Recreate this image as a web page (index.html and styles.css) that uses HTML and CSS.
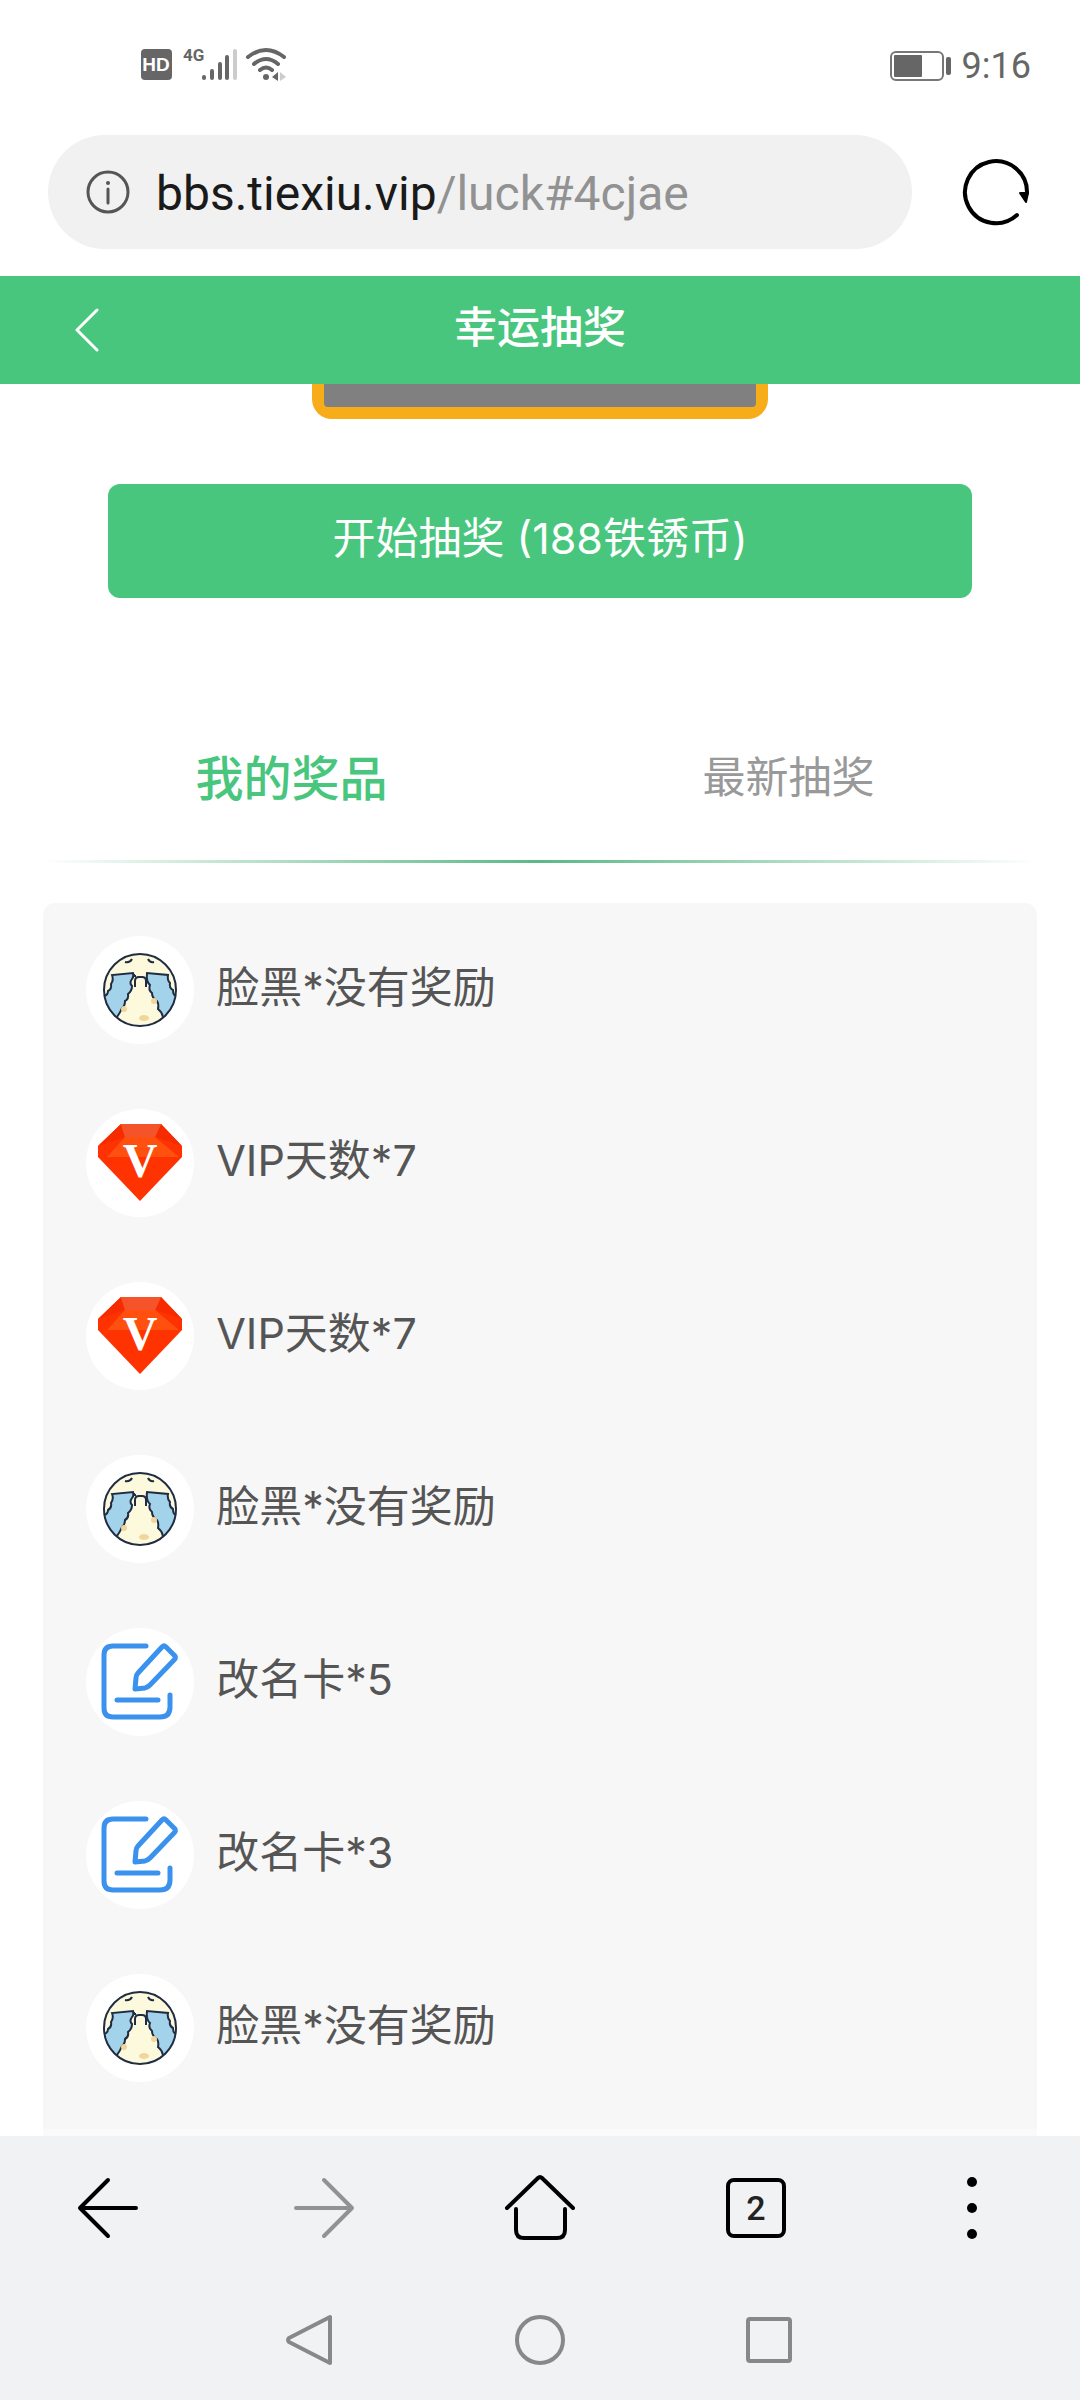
FILE: index.html
```html
<!DOCTYPE html>
<html lang="zh-CN">
<head>
<meta charset="utf-8">
<meta name="viewport" content="width=device-width, initial-scale=1">
<title>幸运抽奖</title>
<link rel="stylesheet" href="styles.css">
</head>
<body>
<svg class="defs" aria-hidden="true">
  <symbol id="face" viewBox="0 0 108 108">
    <circle cx="54" cy="54" r="36" fill="#fdf9dc"/>
    <path d="M26 39 47 37Q48 41 46 43Q43 47 46 50Q46 55 42 58Q43 63 39 65Q39 70 36 72Q34 77 31 81Q19 72 18 60Q22 59 22 55Q26 53 25 48Q28 44 26 39ZM61 37 82 39Q81 44 84 47Q83 52 87 54Q87 59 90 60Q89 72 77 81Q76 76 72 73Q73 68 71 65Q66 62 66 57Q62 54 64 49Q60 46 61 37Z" fill="#a3d3ea"/>
    <path d="M18 60Q22 59 22 55Q26 53 25 48Q28 44 26 39L47 37Q48 41 46 43Q43 47 46 50Q46 55 42 58Q43 63 39 65Q39 70 36 72Q34 77 31 81M90 60Q87 59 87 54Q83 52 84 47Q81 44 82 39L61 37Q60 46 64 49Q62 54 66 57Q66 62 71 65Q73 68 72 73Q76 76 77 81" fill="none" stroke="#202c42" stroke-width="2"/>
    <circle cx="38" cy="73" r="3" fill="#f0d59c"/><circle cx="68" cy="65" r="3" fill="#f0d59c"/><ellipse cx="58" cy="82" rx="5" ry="3" fill="#f0d59c"/>
    <circle cx="54" cy="54" r="36" fill="none" stroke="#202c42" stroke-width="2"/>
    <path d="M39 26Q44 27 46 23M62 23Q64 27 68 26M48 38V40H50M49 51V45Q49 41 53 41H56Q60 41 60 45V51" fill="none" stroke="#202c42" stroke-width="2"/>
  </symbol>
  <symbol id="gem" viewBox="0 0 108 108">
    <path d="M35 15H75L96 37V48L54 92 12 48V37Z" fill="#ff3301"/>
    <path d="M12 37 35 15 39 28ZM96 37 75 15 69 28Z" fill="#f62b00"/>
    <path d="M35 15H75L69 28 93 48H21L39 28Z" fill="#ff5010"/>
    <path d="M35 15H75L69 28H39Z" fill="#f5532a"/>
  </symbol>
  <symbol id="edit" viewBox="-1 0 108 108">
    <path d="M59 18H26Q17 18 17 27V80Q17 89 26 89H73Q83 89 83 79V67M30 72H71M48 61 49 50Q49 47 51 45L75 19Q77 17 79 19L88 28Q89 30 87 32L63 57Q61 59 58 60Z" fill="none" stroke="#3a92ee" stroke-width="5" stroke-linecap="round" stroke-linejoin="round"/>
  </symbol>
</svg>

<div class="status">
  <svg class="status-icons" viewBox="0 0 150 40" role="img" aria-label="HD 4G Wi-Fi">
    <rect x="1" y="6" width="31" height="31" rx="4" fill="#666"/>
    <text x="16" y="28" text-anchor="middle" class="hd">HD</text>
    <text x="43" y="18" class="net">4G</text>
    <path d="M64 34V35M72 28V35M80 21V35M87 14V35" stroke="#666" stroke-width="4" stroke-linecap="round"/>
    <path d="M95 8V35" stroke="#ccc" stroke-width="4" stroke-linecap="round"/>
    <path d="M108 14Q126 0 144 14M114 21Q126 11 138 21M120 27Q126 22 132 27" fill="none" stroke="#666" stroke-width="4" stroke-linecap="round"/>
    <circle cx="126" cy="34" r="3" fill="#666"/><path d="M132 34 138 29V38Z" fill="#666"/><path d="M140 29 146 34 140 38Z" fill="#ccc"/>
  </svg>
  <div class="status-right">
    <svg class="battery" viewBox="0 0 62 32" role="img" aria-label="电量">
      <rect x="1" y="2" width="52" height="28" rx="5" fill="none" stroke="#777" stroke-width="2"/>
      <rect x="4" y="5" width="28" height="22" rx="1" fill="#666"/><rect x="56" y="7" width="5" height="18" rx="2" fill="#666"/>
    </svg>
    <time>9:16</time>
  </div>
</div>

<div class="address">
  <button class="url" type="button">
    <svg class="info" viewBox="0 0 44 44" aria-hidden="true"><circle cx="22" cy="22" r="20" fill="none" stroke="#555" stroke-width="3"/><circle cx="22" cy="13" r="2" fill="#555"/><path d="M22 19V33" stroke="#555" stroke-width="3" stroke-linecap="round"/></svg>
    <span class="url-text">bbs.tiexiu.vip<span class="path">/luck#4cjae</span></span>
  </button>
  <button class="reload" type="button" aria-label="刷新">
    <svg viewBox="0 0 72 72" aria-hidden="true"><path d="M57 59A31 31 0 1 1 67 37" fill="none" stroke="#000" stroke-width="4" stroke-linecap="round"/><path d="M60 37H68L66 46Z" stroke="#000" stroke-width="2" stroke-linejoin="round"/></svg>
  </button>
</div>

<header class="titlebar">
  <a class="back" href="#" aria-label="返回"><svg viewBox="0 0 24 44" aria-hidden="true"><path d="M22 2 2 22 22 42" fill="none" stroke="#fff" stroke-width="3" stroke-linecap="round" stroke-linejoin="round"/></svg></a>
  <h1>幸运抽奖</h1>
</header>

<main>
  <div class="reel"><div class="reel-window"></div></div>
  <button class="start" type="button">开始抽奖 (188铁锈币)</button>
  <div class="tabs" role="tablist">
    <button class="tab active" type="button" role="tab" aria-selected="true">我的奖品</button>
    <button class="tab" type="button" role="tab" aria-selected="false">最新抽奖</button>
  </div>
  <ul class="prizes">
    <li><svg class="avatar" aria-hidden="true"><use href="#face"/></svg><span>脸黑*没有奖励</span></li>
    <li><svg class="avatar" aria-hidden="true"><use href="#gem"/><text x="54" y="68" class="gem-letter">V</text></svg><span>VIP天数*7</span></li>
    <li><svg class="avatar" aria-hidden="true"><use href="#gem"/><text x="54" y="68" class="gem-letter">V</text></svg><span>VIP天数*7</span></li>
    <li><svg class="avatar" aria-hidden="true"><use href="#face"/></svg><span>脸黑*没有奖励</span></li>
    <li><svg class="avatar" aria-hidden="true"><use href="#edit"/></svg><span>改名卡*5</span></li>
    <li><svg class="avatar" aria-hidden="true"><use href="#edit"/></svg><span>改名卡*3</span></li>
    <li><svg class="avatar" aria-hidden="true"><use href="#face"/></svg><span>脸黑*没有奖励</span></li>
  </ul>
</main>

<footer>
  <nav class="toolbar" aria-label="浏览器">
    <button type="button" aria-label="后退"><svg viewBox="0 0 72 72" aria-hidden="true"><path d="M36 8 8 36 36 64M8 36H64" fill="none" stroke="#000" stroke-width="4" stroke-linecap="round" stroke-linejoin="round"/></svg></button>
    <button type="button" aria-label="前进"><svg viewBox="0 0 72 72" aria-hidden="true"><path d="M36 8 64 36 36 64M64 36H8" fill="none" stroke="#929292" stroke-width="4" stroke-linecap="round" stroke-linejoin="round"/></svg></button>
    <button type="button" aria-label="主页"><svg viewBox="0 0 72 72" aria-hidden="true"><path d="M3 36 34 6Q36 4 38 6L69 36M12 37V58Q12 66 20 66H53Q61 66 61 58V37" fill="none" stroke="#000" stroke-width="4" stroke-linecap="round" stroke-linejoin="round"/></svg></button>
    <button type="button" aria-label="标签页"><span class="count">2</span></button>
    <button type="button" aria-label="菜单"><svg viewBox="0 0 72 72" aria-hidden="true"><circle cx="36" cy="10" r="5"/><circle cx="36" cy="36" r="5"/><circle cx="36" cy="62" r="5"/></svg></button>
  </nav>
  <nav class="system" aria-label="系统导航">
    <button type="button" aria-label="返回"><svg viewBox="0 0 56 56" aria-hidden="true"><path d="M48 5V51L7 30Q5 28 7 26Z"/></svg></button>
    <button type="button" aria-label="桌面"><svg viewBox="0 0 56 56" aria-hidden="true"><circle cx="28" cy="28" r="23"/></svg></button>
    <button type="button" aria-label="最近任务"><svg viewBox="0 0 56 56" aria-hidden="true"><rect x="6" y="7" width="42" height="42" rx="2"/></svg></button>
  </nav>
</footer>
</body>
</html>
```
FILE: styles.css
```css
* { box-sizing: border-box; }

body {
  margin: 0;
  min-height: 100vh;
  display: flex;
  flex-direction: column;
  background: #fff;
  color: #555;
  font-family: Inter, "Noto Sans CJK SC", sans-serif;
  font-size: 43px;
  line-height: 60px;
}

button {
  padding: 0;
  border: 0;
  background: none;
  color: inherit;
  font: inherit;
}

svg { display: block; }
.defs { position: absolute; width: 0; height: 0; }

.status {
  height: 135px;
  padding: 42px 49px 0 140px;
  display: flex;
  justify-content: space-between;
  align-items: flex-start;
}
.status-icons { width: 150px; height: 40px; margin-top: 1px; }
.hd { font: 700 19px "Liberation Sans", sans-serif; fill: #fff; }
.net { font: 700 17px Roboto, sans-serif; fill: #666; }
.status-right {
  display: flex;
  align-items: center;
  gap: 10px;
  color: #666;
  font: 36px/48px Roboto, sans-serif;
}
.battery { width: 62px; height: 32px; }

.address {
  height: 141px;
  padding: 0 48px;
  display: flex;
  align-items: flex-start;
}
.url {
  flex: 1;
  height: 114px;
  padding: 0 38px;
  display: flex;
  align-items: center;
  gap: 26px;
  border-radius: 57px;
  background: #f1f1f1;
  color: #1a1a1a;
  font: 48px/56px Roboto, sans-serif;
}
.url-text { padding-top: 4px; }
.info { width: 44px; height: 44px; }
.path { color: #929292; }
.reload { margin: 21px 0 0 48px; }
.reload svg { width: 72px; height: 72px; }

.titlebar {
  height: 108px;
  padding: 0 75px;
  display: grid;
  grid-template-columns: 24px 1fr 24px;
  align-items: center;
  background: #48c67d;
  color: #fff;
}
.back svg { width: 24px; height: 44px; }
h1 {
  margin: 0 0 6px;
  font-size: 43px;
  font-weight: 500;
  text-align: center;
}

main {
  flex: 1;
  padding: 0 4%;
  display: flex;
  flex-direction: column;
}
.reel {
  align-self: center;
  width: 456px;
  height: 35px;
  padding: 0 12px 12px;
  border-radius: 0 0 20px 20px;
  background: #f7ac19;
}
.reel-window {
  height: 23px;
  border-radius: 0 0 4px 4px;
  background: #808080;
}
.start {
  height: 114px;
  margin: 65px 65px 0;
  padding-bottom: 6px;
  border-radius: 12px;
  background: #48c67d;
  color: #fff;
}

.tabs {
  display: flex;
  height: 265px;
  padding-bottom: 3px;
  background: linear-gradient(90deg, transparent, #5ab986, transparent) bottom / 100% 3px no-repeat;
}
.tab { flex: 1; padding-top: 96px; color: #999; }
.active { padding-top: 100px; color: #48c67d; font-size: 48px; font-weight: 500; }

.prizes {
  flex: 1;
  margin: 40px 0 0;
  padding: 0 43px;
  border-radius: 12px 12px 0 0;
  background: #f7f7f7;
  list-style: none;
}
.prizes li {
  height: 173px;
  display: flex;
  align-items: center;
  gap: 22px;
}
.prizes span { padding-bottom: 6px; }
.avatar {
  width: 108px;
  height: 108px;
  border-radius: 50%;
  background: #fff;
}
.gem-letter {
  font: 700 48px "Liberation Serif", serif;
  fill: #fff;
  text-anchor: middle;
}

footer {
  background: #f1f2f4;
  box-shadow: 0 -7px 0 rgba(255, 255, 255, 0.4);
}
.toolbar {
  height: 144px;
  display: grid;
  grid-template-columns: repeat(5, 1fr);
}
.toolbar button, .system button { display: grid; place-items: center; }
.toolbar svg { width: 72px; height: 72px; }
.count {
  width: 60px;
  height: 60px;
  border: 4px solid #000;
  border-radius: 8px;
  color: #222;
  font: 500 34px/52px Roboto, sans-serif;
  text-align: center;
}
.system {
  height: 120px;
  display: grid;
  grid-template-columns: repeat(3, 230px);
  justify-content: center;
}
.system svg {
  width: 56px;
  height: 56px;
  fill: none;
  stroke: #888;
  stroke-width: 4px;
  stroke-linejoin: round;
}
```
